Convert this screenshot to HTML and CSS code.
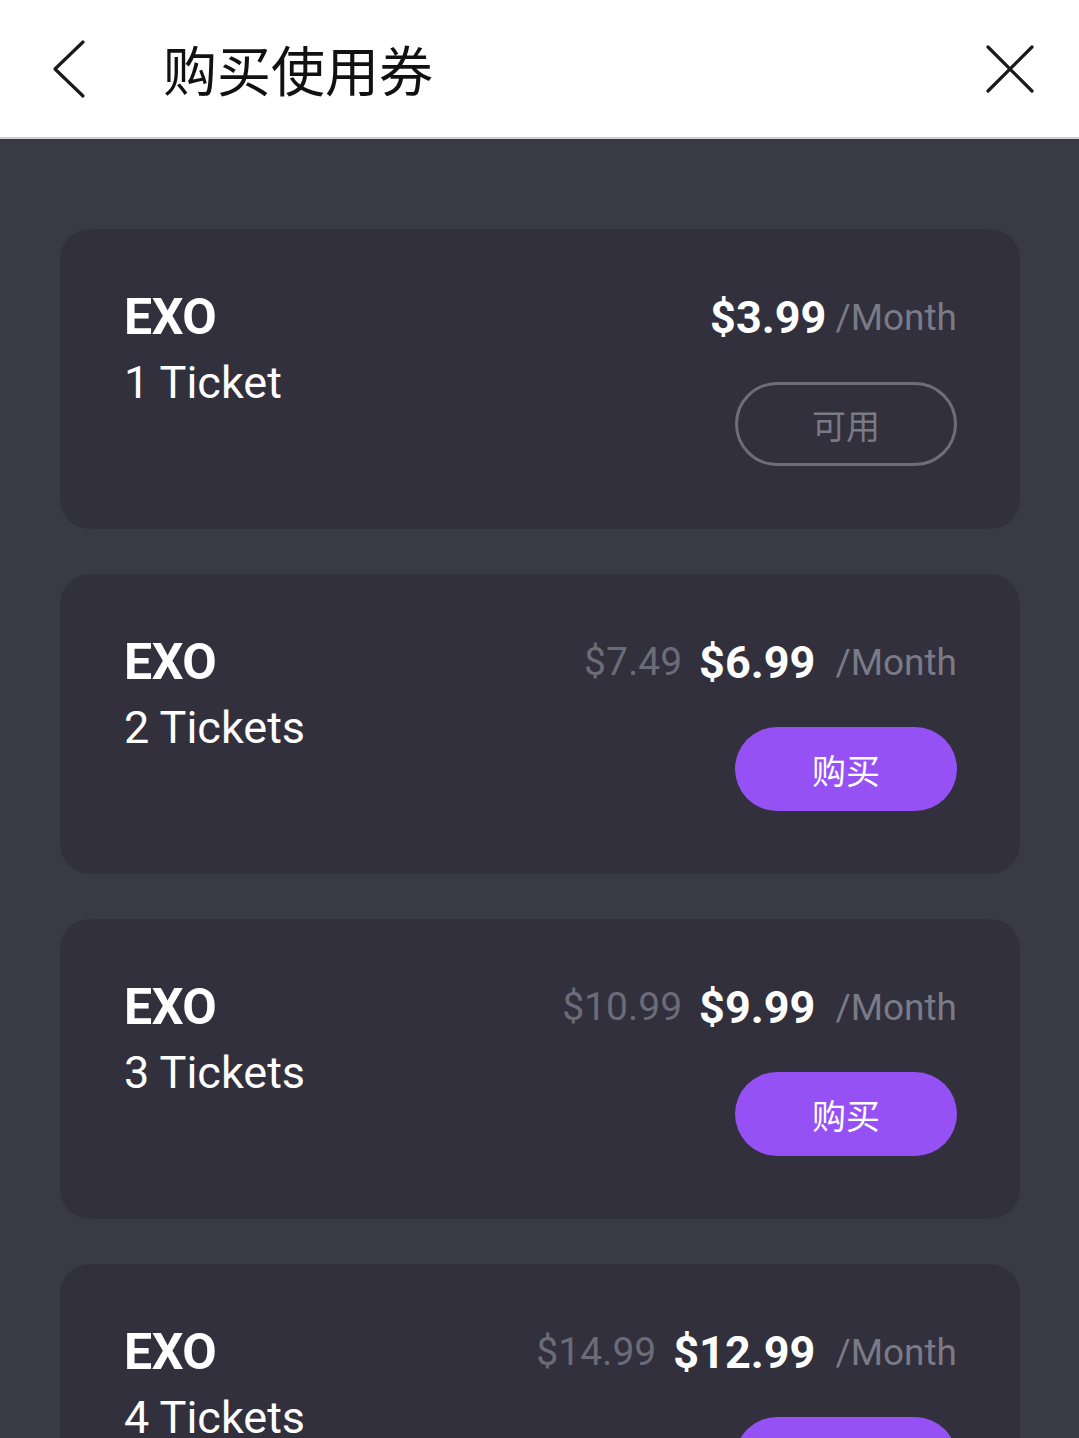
FILE: index.html
```html
<!DOCTYPE html>
<html lang="zh">
<head>
<meta charset="utf-8">
<title>购买使用券</title>
<link rel="stylesheet" href="styles.css">
</head>
<body>
<header class="topbar">
  <button class="icon-btn back" aria-label="back">
    <svg width="40" height="60" viewBox="0 0 40 60"><polyline points="33,3 5,30 33,57" fill="none" stroke="#1a1a1a" stroke-width="3.2" stroke-linecap="round" stroke-linejoin="round"/></svg>
  </button>
  <h1 class="title">购买使用券</h1>
  <button class="icon-btn close" aria-label="close">
    <svg width="50" height="50" viewBox="0 0 50 50"><path d="M3 3 L47 47 M47 3 L3 47" fill="none" stroke="#1a1a1a" stroke-width="3.2" stroke-linecap="round"/></svg>
  </button>
</header>
<main class="list">
  <section class="card">
    <div class="info">
      <div class="name">EXO</div>
      <div class="qty">1 Ticket</div>
    </div>
    <div class="side">
      <div class="price-row">
        <span class="now">$3.99</span>
        <span class="per">/Month</span>
      </div>
      <button class="btn outline">可用</button>
    </div>
  </section>
  <section class="card">
    <div class="info">
      <div class="name">EXO</div>
      <div class="qty">2 Tickets</div>
    </div>
    <div class="side">
      <div class="price-row">
        <span class="old">$7.49</span>
        <span class="now">$6.99</span>
        <span class="per wide">/Month</span>
      </div>
      <button class="btn buy">购买</button>
    </div>
  </section>
  <section class="card">
    <div class="info">
      <div class="name">EXO</div>
      <div class="qty">3 Tickets</div>
    </div>
    <div class="side">
      <div class="price-row">
        <span class="old">$10.99</span>
        <span class="now">$9.99</span>
        <span class="per wide">/Month</span>
      </div>
      <button class="btn buy">购买</button>
    </div>
  </section>
  <section class="card">
    <div class="info">
      <div class="name">EXO</div>
      <div class="qty">4 Tickets</div>
    </div>
    <div class="side">
      <div class="price-row">
        <span class="old">$14.99</span>
        <span class="now">$12.99</span>
        <span class="per wide">/Month</span>
      </div>
      <button class="btn buy">购买</button>
    </div>
  </section>
</main>
</body>
</html>
```
FILE: styles.css
```css
* { box-sizing: border-box; }
html, body {
  margin: 0;
  padding: 0;
  background: #3a3a46;
  font-family: Roboto, "Noto Sans CJK SC", sans-serif;
  overflow: hidden;
  height: 1438px;
}
.topbar {
  height: 139px;
  background: #ffffff;
  border-bottom: 2px solid #cfcfd4;
  display: flex;
  align-items: center;
  padding: 0 44px 0 50px;
}
.icon-btn {
  background: none;
  border: 0;
  padding: 0;
  display: flex;
  align-items: center;
  justify-content: center;
}
.back { width: 40px; height: 60px; }
.title {
  margin: 0 0 0 73px;
  font-family: "Noto Sans CJK SC", sans-serif;
  font-weight: 400;
  font-size: 54px;
  color: #111;
  flex: 1;
  line-height: 1;
}
.close { width: 50px; height: 50px; }
.list {
  padding: 90px 59px 0 60px;
  display: flex;
  flex-direction: column;
  gap: 45px;
}
.card {
  background: #31303c;
  border-radius: 30px;
  height: 300px;
  flex-shrink: 0;
  padding: 55px 63px 63px 64px;
  display: flex;
  justify-content: space-between;
  color: #fff;
}
.name {
  font-weight: 700;
  font-size: 50px;
  line-height: 66px;
  letter-spacing: -0.5px;
}
.qty {
  font-size: 45px;
  line-height: 66px;
}
.side {
  display: flex;
  flex-direction: column;
  align-items: flex-end;
}
.price-row {
  height: 66px;
  display: flex;
  align-items: center;
  white-space: nowrap;
}
.old {
  font-size: 39px;
  color: #6c6b78;
  margin-right: 17px;
}
.now {
  font-weight: 700;
  font-size: 45px;
  color: #fff;
}
.per {
  font-size: 37px;
  color: #7b7a87;
  margin-left: 9px;
}
.per.wide { margin-left: 20px; }
.btn {
  margin-top: 32px;
  width: 222px;
  height: 84px;
  border-radius: 42px;
  font-family: "Noto Sans CJK SC", sans-serif;
  font-size: 34px;
  display: flex;
  align-items: center;
  justify-content: center;
  padding: 0;
}
.outline {
  background: transparent;
  border: 3px solid #6e6d79;
  color: #7a7986;
}
.buy {
  background: #9651f5;
  border: 0;
  color: #fff;
}
```
